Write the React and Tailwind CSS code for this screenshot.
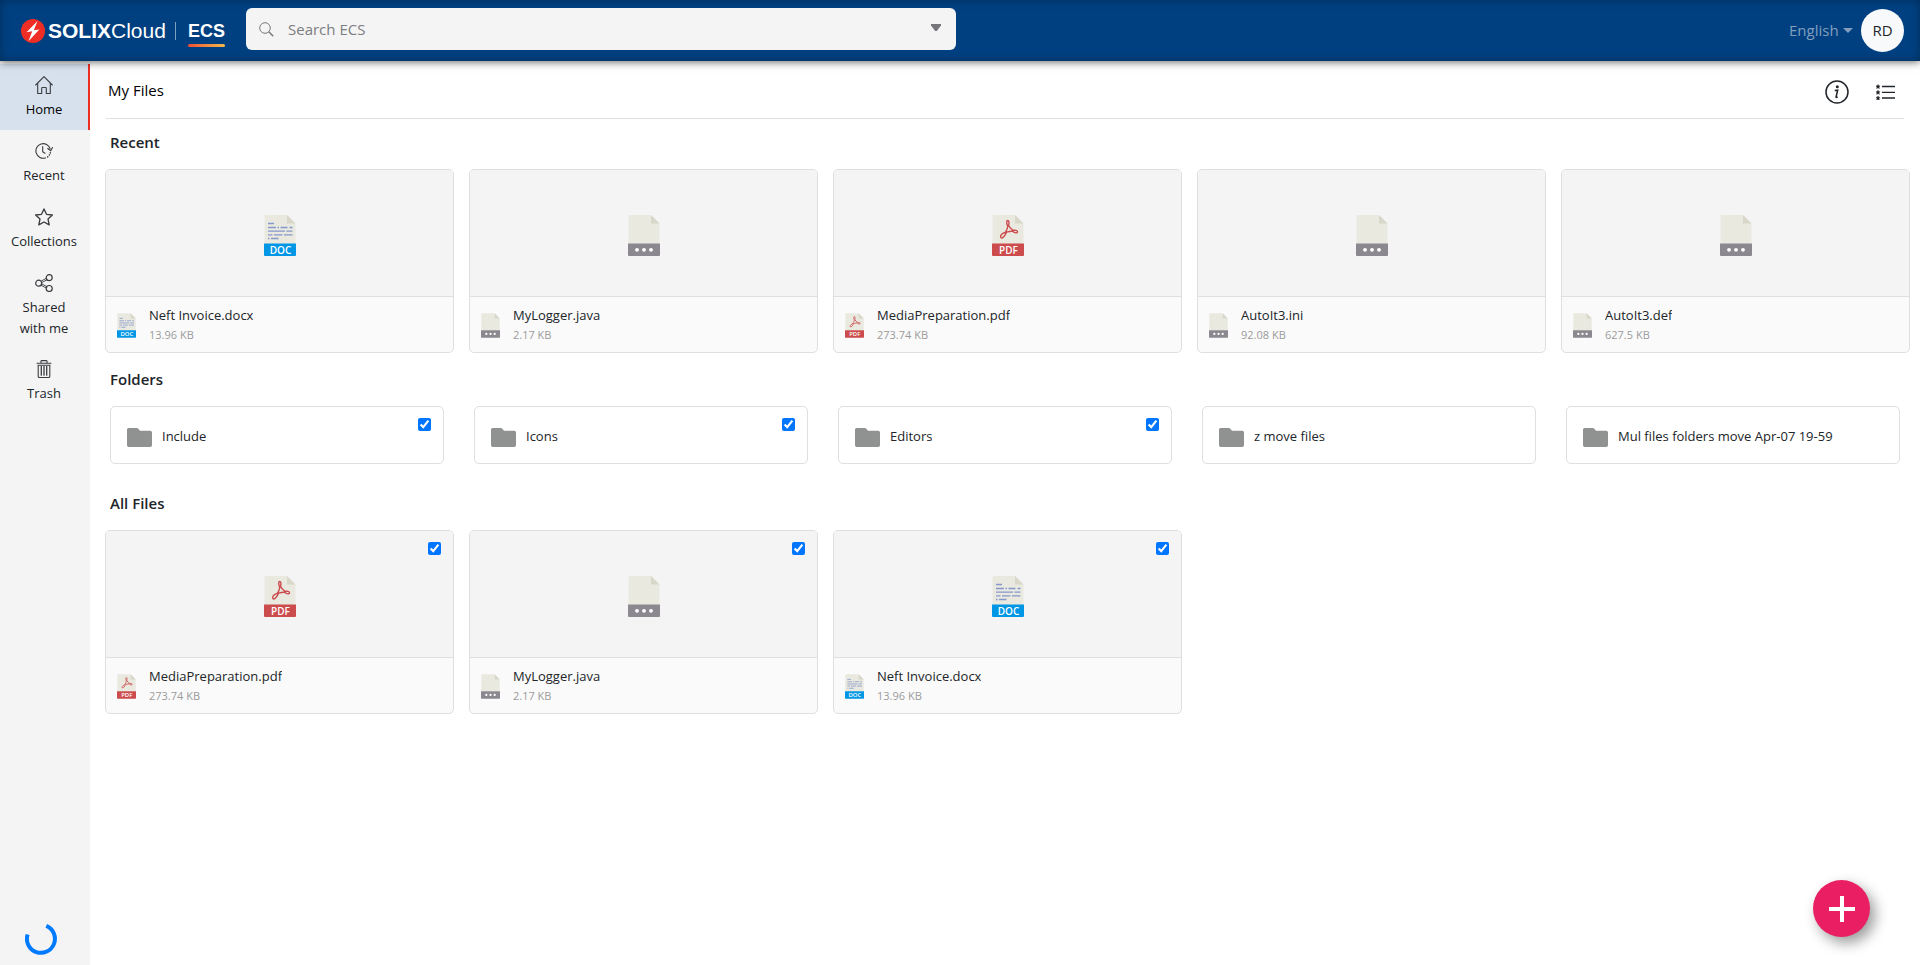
import React, { useState } from "react";

const recentFiles = [
  { name: "Neft Invoice.docx", size: "13.96 KB", type: "doc" },
  { name: "MyLogger.java", size: "2.17 KB", type: "other" },
  { name: "MediaPreparation.pdf", size: "273.74 KB", type: "pdf" },
  { name: "AutoIt3.ini", size: "92.08 KB", type: "other" },
  { name: "AutoIt3.def", size: "627.5 KB", type: "other" },
];

const folders = [
  { name: "Include", selected: true },
  { name: "Icons", selected: true },
  { name: "Editors", selected: true },
  { name: "z move files", selected: false },
  { name: "Mul files folders move Apr-07 19-59", selected: false },
];

const allFiles = [
  { name: "MediaPreparation.pdf", size: "273.74 KB", type: "pdf" },
  { name: "MyLogger.java", size: "2.17 KB", type: "other" },
  { name: "Neft Invoice.docx", size: "13.96 KB", type: "doc" },
];

const bandColors = { doc: "#0096e6", pdf: "#cc4b4c", other: "#8c888f" };

function FileIcon({ type, className }) {
  return (
    <svg viewBox="0 0 32 41" className={className} aria-hidden="true">
      <path d="M0.5 1a1 1 0 0 1 1-1H23l8.500 8.500V29H0.500z" fill="#e9e9e0" />
      <path d="M23 0l8.500 8.500H23z" fill="#d9d7ca" />
      <path d="M0 28.500h32V40a1 1 0 0 1-1 1H1a1 1 0 0 1-1-1z" fill={bandColors[type]} />
      {type === "doc" && (
        <g stroke="#8697cb" strokeWidth="1.300" fill="none">
          <path d="M4 8.500h6" />
          <path d="M4 12.500h8M13.500 12.500h1.500M16.500 12.500h7M25.500 12.500h3" />
          <path d="M4 16.200h17M22.500 16.200h6" />
          <path d="M4 19.800h4.500M10 19.800h8.500M20 19.800h8.500" />
          <path d="M4 23.500h1.500M7 23.500h7.500" />
        </g>
      )}
      {type === "pdf" && (
        <path
          d="M15.800 5.500c-1.500 0-1.300 2.700-.2 5.600.3.900-.8 3.700-2 6-2.900 1.100-5.300 3.200-4.900 5 .4 1.700 2.500 1.200 4.900-3 .2-.6.600-1.300.9-1.900 2-.7 4.500-1.100 6-1 2.500 2.200 5 2 5 .6 0-1.500-2.500-1.700-4.700-1.500-1.900-1.500-3.500-3.200-4.200-4.800.7-2.700.4-5-.8-5z"
          fill="none"
          stroke="#cc4b4c"
          strokeWidth="1.400"
          strokeLinejoin="round"
        />
      )}
      {type === "other" ? (
        <g fill="#fff">
          <circle cx="9" cy="34.800" r="1.900" />
          <circle cx="16" cy="34.800" r="1.900" />
          <circle cx="23" cy="34.800" r="1.900" />
        </g>
      ) : (
        <text
          x="16.500"
          y="38.500"
          textAnchor="middle"
          fill="#fff"
          fontSize="10"
          fontWeight="600"
          fontFamily="'Open Sans', sans-serif"
        >
          {type === "doc" ? "DOC" : "PDF"}
        </text>
      )}
    </svg>
  );
}

function NavIcon({ children }) {
  return (
    <svg
      viewBox="0 0 18 18"
      className="size-[18px]"
      fill="none"
      stroke="#3a3d40"
      strokeWidth="1.100"
      strokeLinecap="round"
      strokeLinejoin="round"
      aria-hidden="true"
    >
      {children}
    </svg>
  );
}

const navItems = [
  {
    label: "Home",
    active: true,
    icon: <path d="M.7 9L9 .7 17.300 9M2.700 7.300v10.200h4v-5.300a.7.700 0 0 1 .7-.7h3.200a.7.700 0 0 1 .7.700v5.300h4V7.300" />,
  },
  {
    label: "Recent",
    icon: (
      <g>
        <path d="M10.500 15.900A7.300 7.300 0 1 1 15.200 6.800" />
        <path d="M12.700 6.500l3 2.300L17.500 5.500M7.700 4.500v5.200l2.300 1.500" />
        <path d="M12.700 14.900l.1-.1M14.400 13l.1-.2M15.300 10.900v-.1" strokeWidth="1.500" />
      </g>
    ),
  },
  {
    label: "Collections",
    icon: <path d="M9 .9l2.500 5.400 5.900.7-4.400 4 1.200 5.900L9 14l-5.200 2.900L5 11 .6 7l5.900-.7z" strokeWidth="1.300" />,
  },
  {
    label: "Shared with me",
    icon: (
      <g strokeWidth="1.200">
        <circle cx="3.700" cy="9.200" r="3" />
        <circle cx="14.200" cy="3.700" r="3" />
        <circle cx="14.200" cy="14.500" r="3" />
        <path d="M6 7.200l5.300-2.900M6.700 8.600l5.500-2.900M6.700 9.900l5.400 2.800M6 11.200l5.200 2.800" strokeWidth=".9" />
      </g>
    ),
  },
  {
    label: "Trash",
    icon: (
      <g>
        <path d="M2 3.300h14M6 3V1.200a.6.600 0 0 1 .6-.6h4.800a.6.600 0 0 1 .6.600V3M3 5.200h12M3.200 5.400v10.800a1.300 1.300 0 0 0 1.300 1.300h9a1.300 1.300 0 0 0 1.300-1.300V5.400" />
        <path d="M6.300 6.500v8.700M9 6.500v8.700M11.700 6.500v8.700" strokeWidth="1.300" />
      </g>
    ),
  },
];

function Header() {
  return (
    <header className="relative z-10 flex h-[61px] shrink-0 items-center bg-[#004080] pr-4 pl-[21px] shadow-[0_1px_8px_rgba(0,0,0,0.6),inset_0_0_10px_rgba(0,0,0,0.3)]">
      <a href="#home" className="flex w-[225px] shrink-0 items-center font-['Liberation_Sans',sans-serif] text-white">
        <svg viewBox="0 0 24 24" className="size-6" aria-hidden="true">
          <circle cx="12" cy="12" r="12" fill="#ee2e24" />
          <path d="M16.500 2L5.500 13.200l5.700-.9L7.500 22.300 18.300 10.400l-5.500.9z" fill="#fff" />
        </svg>
        <span className="ml-[3px] text-[21px] leading-6">
          <b>SOLIX</b>Cloud
        </span>
        <span className="ml-[9px] h-[18px] w-px bg-[#7fa0c0]" />
        <span className="mt-[6px] ml-3 flex flex-col gap-[3px]">
          <b className="text-[18px] leading-5">ECS</b>
          <span className="h-[3px] rounded-full bg-linear-to-r from-[#ee4a35] to-[#f0b94b]" />
        </span>
      </a>
      <form className="mb-[3px] flex h-[42px] w-[37vw] items-center rounded-[6px] bg-[#f4f4f4] pr-[15px] pl-[13px]">
        <svg viewBox="0 0 15 15" className="size-[15px] shrink-0" fill="none" stroke="#77797c" strokeWidth="1" aria-hidden="true">
          <circle cx="6" cy="6" r="5.300" />
          <path d="M9.800 9.800l4.400 4.400" strokeWidth="1.500" />
        </svg>
        <input
          type="search"
          aria-label="Search ECS"
          placeholder="Search ECS"
          className="ml-[14px] min-w-0 flex-1 bg-transparent text-[15px] leading-5 outline-none placeholder:text-[#7b7d80]"
        />
        <button type="button" aria-label="Search options" className="pb-[3px]">
          <svg viewBox="0 0 10 7" className="h-[7px] w-[10px]" aria-hidden="true">
            <path d="M0 0h10v1.500L5.800 7H4.200L0 1.500z" fill="#74767a" />
          </svg>
        </button>
      </form>
      <div className="ml-auto flex items-center">
        <select aria-label="Language" className="appearance-none bg-transparent pb-[2px] text-[15px] leading-5 text-[#809fbf]">
          <option>English</option>
        </select>
        <svg viewBox="0 0 10 5" className="mr-2 ml-1 h-[5px] w-[10px]" aria-hidden="true">
          <path d="M0 0h10L5 5z" fill="#809fbf" />
        </svg>
        <button type="button" className="size-[43px] rounded-full bg-[#f8f9fa] text-[15px] text-[#212529]">
          RD
        </button>
      </div>
    </header>
  );
}

function Sidebar() {
  return (
    <aside className="flex w-[90px] shrink-0 flex-col bg-[#f4f4f4] pt-[3px]">
      <nav className="flex flex-col">
        {navItems.map((item) => (
          <a
            key={item.label}
            href={"#" + item.label.split(" ")[0].toLowerCase()}
            className={
              "flex min-h-[66px] flex-col items-center gap-[5px] border-r-2 px-2 pt-3 pb-[9px] text-center text-[13px] leading-[21px] " +
              (item.active ? "border-[#ee2e24] bg-[#d6e1ed] text-black" : "border-transparent text-[#212529]")
            }
          >
            <NavIcon>{item.icon}</NavIcon>
            {item.label === "Shared with me" ? (
              <span>
                Shared
                <br />
                with me
              </span>
            ) : (
              <span>{item.label}</span>
            )}
          </a>
        ))}
      </nav>
      <svg viewBox="0 0 32 32" className="mt-auto mb-[10px] ml-[25px] size-8" role="img" aria-label="Loading">
        <path d="M21.300 2.900A14 14 0 1 1 2.600 11.500" fill="none" stroke="#007bff" strokeWidth="4" />
      </svg>
    </aside>
  );
}

function FileCard({ file, selectable }) {
  const [checked, setChecked] = useState(true);
  return (
    <article className="relative flex flex-col overflow-hidden rounded-[5px] border border-[#dfdfdf] bg-[#fafafa]">
      <div className="flex h-[127px] items-center justify-center border-b border-[#dfdfdf] bg-[#f4f4f4] pt-[5px]">
        <FileIcon type={file.type} className="h-[41px] w-8" />
      </div>
      {selectable && (
        <input
          type="checkbox"
          aria-label={"Select " + file.name}
          checked={checked}
          onChange={(e) => setChecked(e.target.checked)}
          className="absolute top-[11px] right-3 size-[13px]"
        />
      )}
      <div className="flex h-[55px] items-center gap-[13px] pl-[11px]">
        <FileIcon type={file.type} className="mt-[2px] h-[25px] w-[19px]" />
        <div className="min-w-0">
          <p className="truncate text-[13px] leading-5 text-[#212529]">{file.name}</p>
          <p className="text-[11px] leading-[19px] text-[#9a9a9a]">{file.size}</p>
        </div>
      </div>
    </article>
  );
}

function FolderCard({ folder }) {
  const [checked, setChecked] = useState(folder.selected);
  return (
    <article className="relative mr-[10px] ml-[5px] flex h-[58px] items-center gap-[10px] rounded-[5px] border border-[#dfdfdf] bg-white pl-4">
      <svg viewBox="0 0 25 19" className="mt-[5px] h-[19px] w-[25px] shrink-0" aria-hidden="true">
        <path d="M1.500 0h8.300a2 2 0 0 1 1.500.7L13 2.800h10.300A1.700 1.700 0 0 1 25 4.500v12.800A1.700 1.700 0 0 1 23.300 19H1.700A1.700 1.700 0 0 1 0 17.300V1.500A1.500 1.500 0 0 1 1.500 0z" fill="#909291" />
      </svg>
      <span className="truncate pt-[2px] text-[13px] leading-5 text-[#212529]">{folder.name}</span>
      {folder.selected && (
        <input
          type="checkbox"
          aria-label={"Select " + folder.name}
          checked={checked}
          onChange={(e) => setChecked(e.target.checked)}
          className="absolute top-[11px] right-3 size-[13px]"
        />
      )}
    </article>
  );
}

function Section({ title, children, className }) {
  return (
    <section className={className}>
      <h2 className="pl-[5px] text-[15px] leading-[22px] font-semibold text-[#212529]">{title}</h2>
      <div className="mt-4 grid grid-cols-5 gap-[15px]">{children}</div>
    </section>
  );
}

function Star({ y }) {
  return <path transform={"translate(2 " + y + ")"} d="M0-2l.6 1.300L2-.6 1 .4 1.300 2 0 1.200-1.300 2-1 .4-2-.6l1.400-.1z" fill="#212529" stroke="#212529" strokeWidth=".5" />;
}

export default function App() {
  return (
    <div className="flex min-h-screen flex-col bg-white font-['Open_Sans','Noto_Sans',sans-serif] text-[#212529]">
      <Header />
      <div className="flex flex-1">
        <Sidebar />
        <main className="min-w-0 flex-1 pr-[10px] pl-[15px]">
          <div className="mr-[6px] ml-px flex h-[58px] items-center border-b border-[#dfdfdf] pt-1 pr-[9px] pl-[2px]">
            <h1 className="pb-[3px] text-[15px] leading-6 text-black">My Files</h1>
            <button type="button" aria-label="Details" className="ml-auto">
              <svg viewBox="0 0 24 24" className="size-6" aria-hidden="true">
                <circle cx="12" cy="12" r="11" fill="none" stroke="#212529" strokeWidth="1.500" />
                <circle cx="12.300" cy="6.700" r="1.500" fill="#212529" />
                <path d="M9.700 10.600l3-.4-1.600 6.600c-.2.900.3.900 1.600.1" fill="none" stroke="#212529" strokeWidth="1.500" />
              </svg>
            </button>
            <button type="button" aria-label="List view" className="ml-[27px]">
              <svg viewBox="0 0 19 16" className="h-4 w-[19px]" aria-hidden="true">
                <Star y={2.5} />
                <Star y={8.3} />
                <Star y={14} />
                <path d="M6 2.500h13M6 8.300h13M6 14h13" stroke="#212529" strokeWidth="1.300" />
              </svg>
            </button>
          </div>
          <Section title="Recent" className="pt-3">
            {recentFiles.map((f) => (
              <FileCard key={f.name} file={f} />
            ))}
          </Section>
          <Section title="Folders" className="pt-[15px]">
            {folders.map((f) => (
              <FolderCard key={f.name} folder={f} />
            ))}
          </Section>
          <Section title="All Files" className="pt-7 pb-8">
            {allFiles.map((f) => (
              <FileCard key={f.name} file={f} selectable />
            ))}
          </Section>
        </main>
      </div>
      <button
        type="button"
        aria-label="Add"
        className="fixed right-[50px] bottom-7 flex size-[57px] items-center justify-center rounded-full bg-[#e91e63] shadow-[5px_6px_14px_rgba(0,0,0,0.4)]"
      >
        <svg viewBox="0 0 26 26" className="size-[26px]" aria-hidden="true">
          <path d="M13 0v26M0 13h26" stroke="#fff" strokeWidth="4" />
        </svg>
      </button>
    </div>
  );
}
